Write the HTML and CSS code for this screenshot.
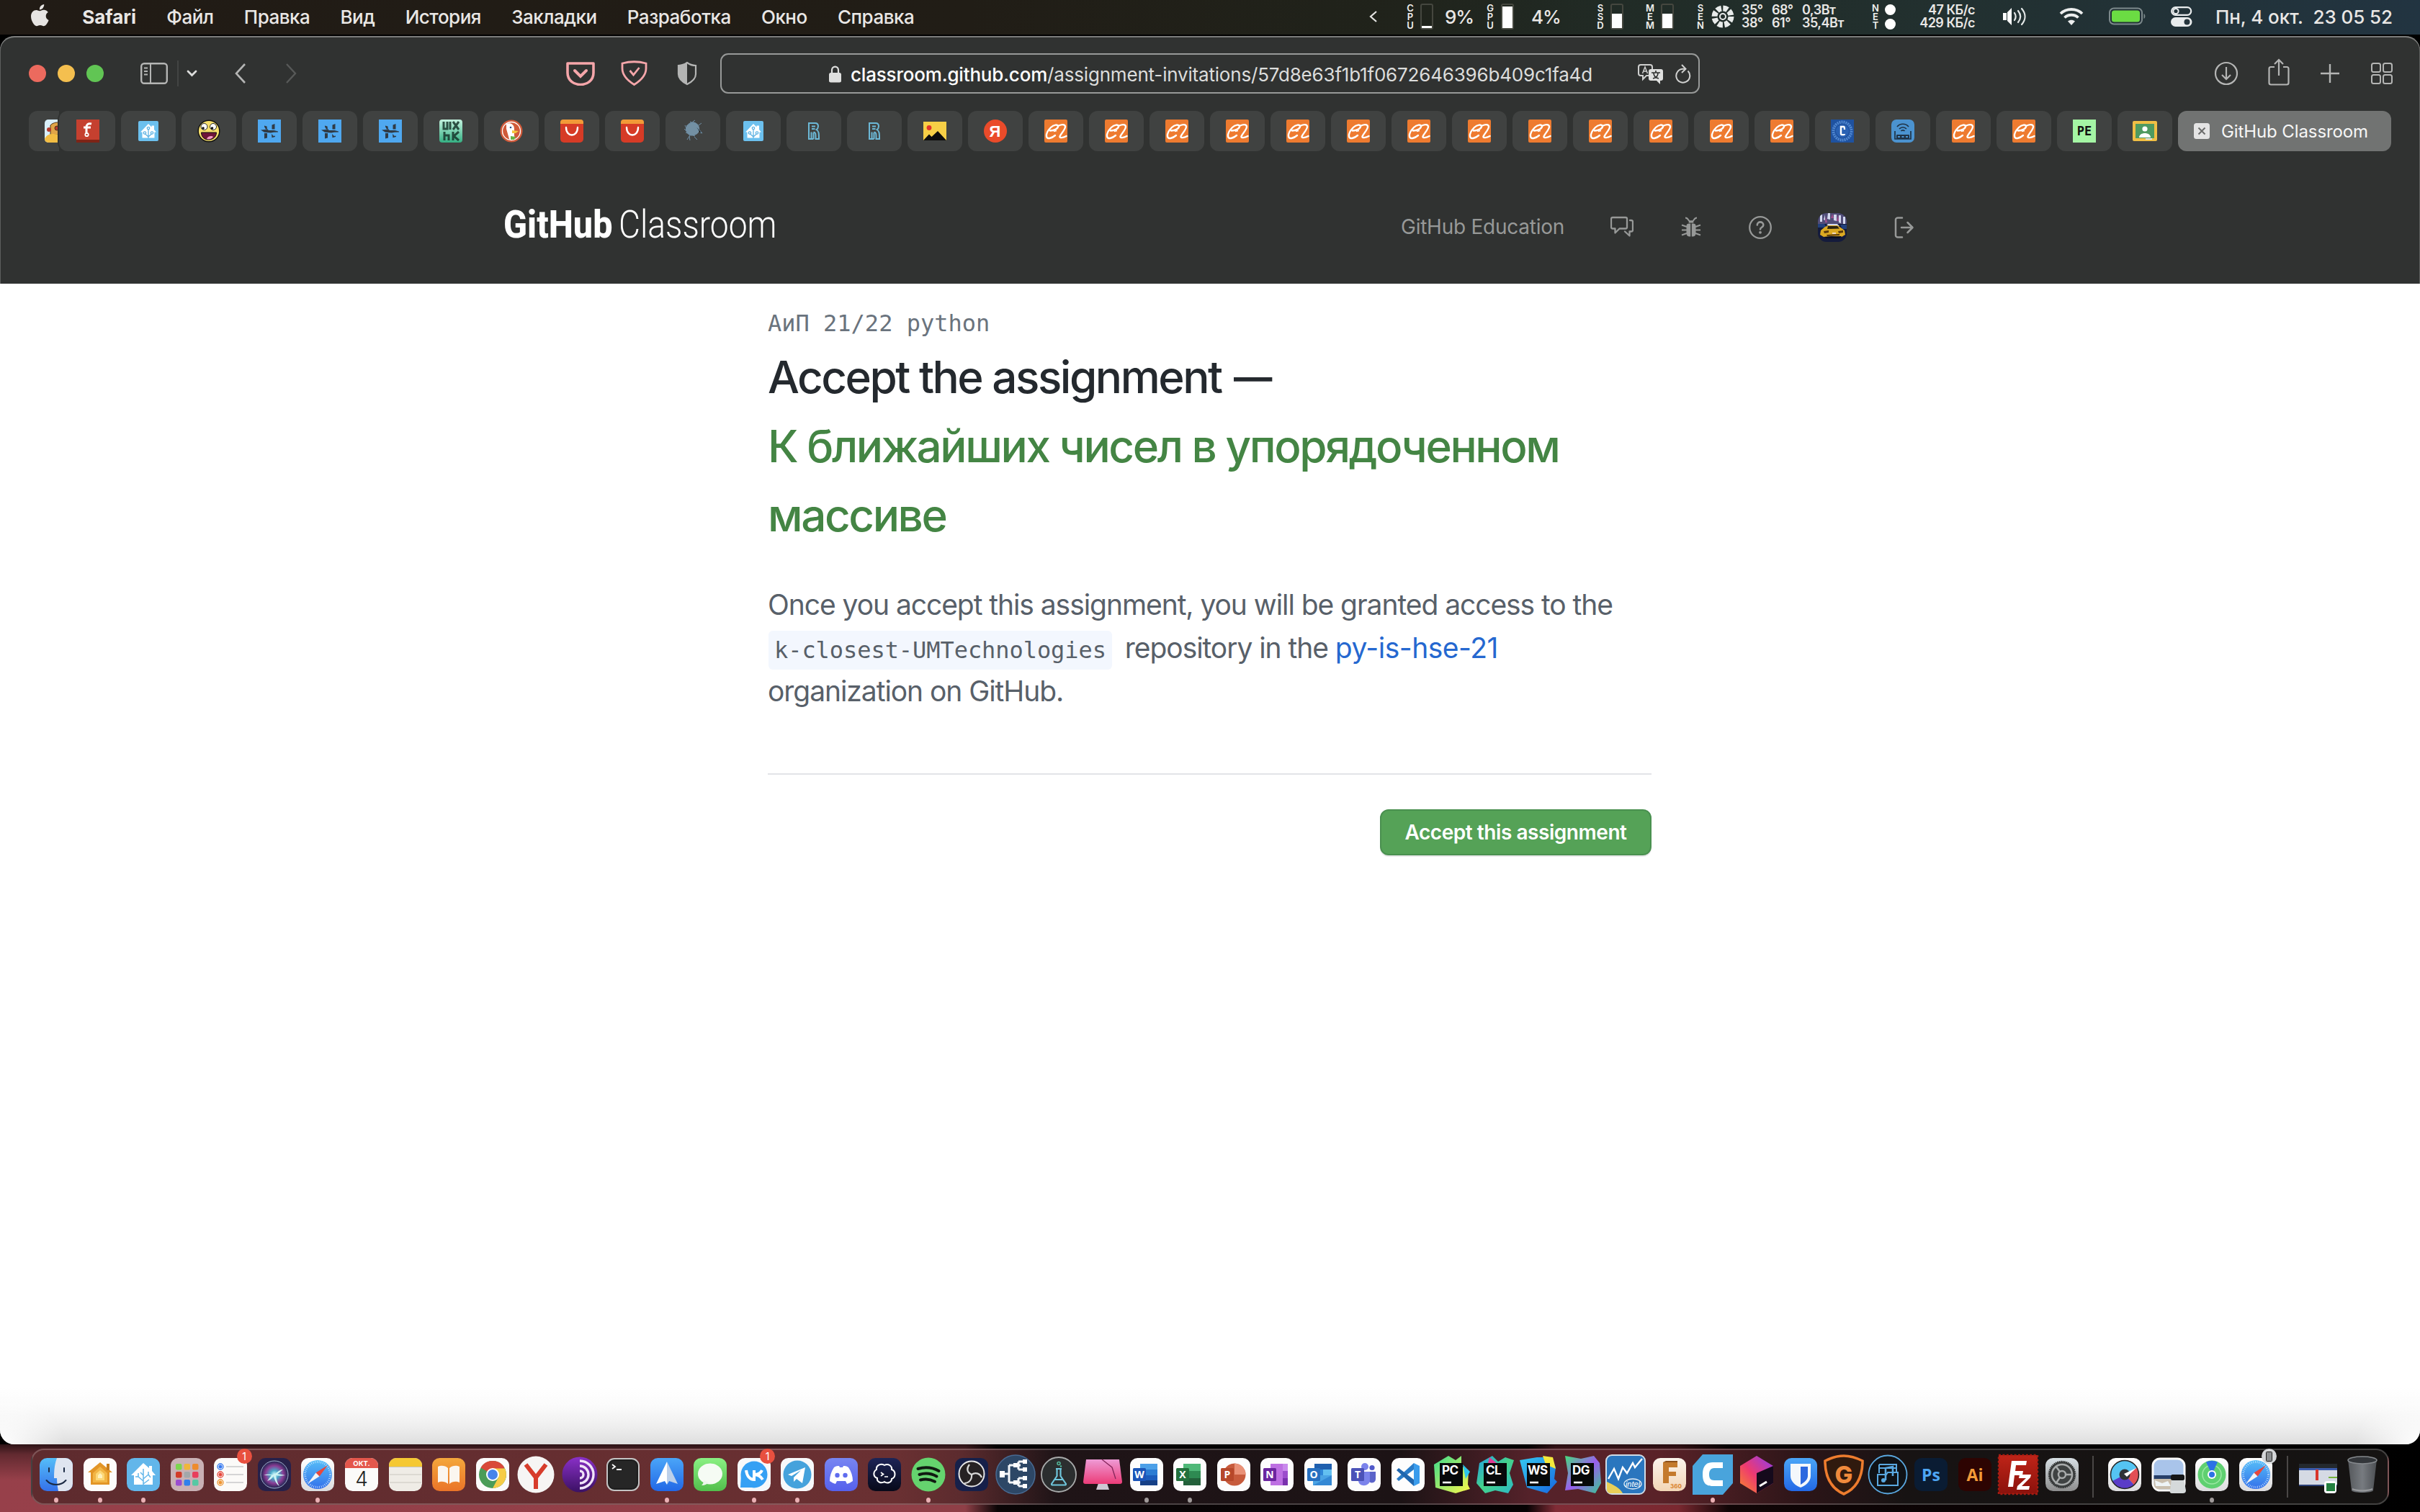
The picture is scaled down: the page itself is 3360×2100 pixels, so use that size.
FILE: index.html
```html
<!DOCTYPE html>
<html lang="ru">
<head>
<meta charset="utf-8">
<title>GitHub Classroom</title>
<link rel="stylesheet" href="styles.css">
</head>
<body>
<svg class="defs" width="0" height="0">
  <defs>
    <linearGradient id="gBlue" x1="0" y1="0" x2="0" y2="1"><stop offset="0" stop-color="#4aa5f8"/><stop offset="1" stop-color="#2268e6"/></linearGradient>
    <linearGradient id="gSky" x1="0" y1="0" x2="0" y2="1"><stop offset="0" stop-color="#55bdf8"/><stop offset="1" stop-color="#3471ea"/></linearGradient>
    <linearGradient id="gGreen" x1="0" y1="0" x2="0" y2="1"><stop offset="0" stop-color="#8af083"/><stop offset="1" stop-color="#52bf4c"/></linearGradient>
    <linearGradient id="gWhite" x1="0" y1="0" x2="0" y2="1"><stop offset="0" stop-color="#ffffff"/><stop offset="1" stop-color="#dcdcde"/></linearGradient>
    <linearGradient id="gOrange" x1="0" y1="0" x2="0" y2="1"><stop offset="0" stop-color="#f4a73c"/><stop offset="1" stop-color="#ea7428"/></linearGradient>
    <linearGradient id="gPurple" x1="0" y1="0" x2="0" y2="1"><stop offset="0" stop-color="#8a30c8"/><stop offset="1" stop-color="#3b1164"/></linearGradient>
    <linearGradient id="gPink" x1="0" y1="0" x2="0" y2="1"><stop offset="0" stop-color="#ee9bd6"/><stop offset="1" stop-color="#ec3c78"/></linearGradient>
    <linearGradient id="gIndigo" x1="0" y1="0" x2="0" y2="1"><stop offset="0" stop-color="#7785f2"/><stop offset="1" stop-color="#5661ec"/></linearGradient>
    <linearGradient id="gNavy" x1="0" y1="0" x2="0" y2="1"><stop offset="0" stop-color="#1d2456"/><stop offset="1" stop-color="#070919"/></linearGradient>
    <linearGradient id="gJetG" x1="0" y1="0" x2="1" y2="1"><stop offset="0" stop-color="#3ddb8c"/><stop offset="1" stop-color="#fcf84a"/></linearGradient>
    <linearGradient id="gJetC" x1="0" y1="0" x2="1" y2="1"><stop offset="0" stop-color="#1f9fe8"/><stop offset=".5" stop-color="#45d38a"/><stop offset="1" stop-color="#2bb8c8"/></linearGradient>
    <linearGradient id="gJetW" x1="0" y1="0" x2="1" y2="1"><stop offset="0" stop-color="#35c8f0"/><stop offset="1" stop-color="#1767e0"/></linearGradient>
    <linearGradient id="gJetD" x1="0" y1="0" x2="1" y2="1"><stop offset="0" stop-color="#45dc7c"/><stop offset=".5" stop-color="#9a5df0"/><stop offset="1" stop-color="#38c890"/></linearGradient>
    <linearGradient id="gTool" x1="0" y1="1" x2="1" y2="0"><stop offset="0" stop-color="#f98a2a"/><stop offset=".45" stop-color="#ee3a70"/><stop offset="1" stop-color="#8d3cf0"/></linearGradient>
    <linearGradient id="gGear" x1="0" y1="0" x2="0" y2="1"><stop offset="0" stop-color="#d7dfe4"/><stop offset="1" stop-color="#8d8d8d"/></linearGradient>
    <linearGradient id="gFusion" x1="0" y1="0" x2="0" y2="1"><stop offset="0" stop-color="#fbf4ec"/><stop offset="1" stop-color="#f3d6b6"/></linearGradient>
    <linearGradient id="gRedFz" x1="0" y1="0" x2="0" y2="1"><stop offset="0" stop-color="#bf2418"/><stop offset="1" stop-color="#8a120c"/></linearGradient>
    <linearGradient id="gTrash" x1="0" y1="0" x2="1" y2="0"><stop offset="0" stop-color="#55585c"/><stop offset=".5" stop-color="#777b80"/><stop offset="1" stop-color="#4c4f53"/></linearGradient>
    <linearGradient id="gUx" x1="0" y1="0" x2="0" y2="1"><stop offset="0" stop-color="#c3f3df"/><stop offset="1" stop-color="#35b083"/></linearGradient>
    <radialGradient id="gSiri"><stop offset="0" stop-color="#d8ffff"/><stop offset=".3" stop-color="#4aa8c8"/><stop offset=".65" stop-color="#8a3c94"/><stop offset="1" stop-color="#1c2450"/></radialGradient>

    <symbol id="ali" viewBox="0 0 32 32"><rect width="32" height="32" rx="2" fill="#ee7b30"/><path d="M8 15.500c6 0 11-3 11-6 0-3-6-2.500-10 1.500C5 15 2.500 20 3 23.500c.5 4 7 3 12-1.500" fill="none" stroke="#fff" stroke-width="2.400" stroke-linecap="round"/><path d="M13 16.500l4-1" stroke="#fff" stroke-width="1.600"/><path d="M20 8.500c4-2 8.500-2 9 1 .5 4-6 10-7.500 14-.5 2.500 5 2 9-.5" fill="none" stroke="#fff" stroke-width="2.400" stroke-linecap="round"/></symbol>
    <symbol id="hass" viewBox="0 0 28 28"><rect width="28" height="28" rx="2" fill="#6cc0ee"/><path d="M14 4l4.500 4.500V6.500H22v5.500l3 3.500h-2.500v8H5.500v-8H3z" fill="#fff"/><path d="M14 24V11M14 22l-5-4.500M14 22l5-4.500" stroke="#5fb2e2" stroke-width="1.300" fill="none"/><g fill="#fff" stroke="#5fb2e2" stroke-width="1.300"><circle cx="14" cy="10" r="1.700"/><circle cx="9" cy="16.500" r="1.700"/><circle cx="19" cy="16.500" r="1.700"/></g></symbol>
    <symbol id="hh" viewBox="0 0 32 32"><rect width="32" height="32" fill="#4fa8f0"/><path d="M4 14.500l10-1 .5 1.500h8l5.500 1.500v1l-6 .3-4 .7-9-.7z" fill="#303b46"/><path d="M19.500 7.500l4-1.500v7.500h-4zM9 19h4v6.500l-4 1zM9 8.500l3.500 1 .5 4H11L9 10zM19 20l3 3 2-.5v1.500l-4.500 1.200z" fill="#303b46"/></symbol>
    <symbol id="aliex" viewBox="0 0 32 32"><rect width="32" height="32" rx="5" fill="#d63b26"/><path d="M0 6V4a4 4 0 014-4h24a4 4 0 014 4v2z" fill="#f19a38"/><path d="M8 11c0 14 16 14 16 0" fill="none" stroke="#fff" stroke-width="2.400" stroke-linecap="round"/></symbol>
    <symbol id="rr" viewBox="0 0 24 24"><g fill="none" stroke="#6cb8d6" stroke-width="2"><path d="M5 1v22h3.500V13.500"/><path d="M4 1h10c3 0 4 2 4 4.500s-1 3.500-2.500 4.500C19 12 19 15 19 23h-4.500c0-6 .5-9.500-3-9.500M11.500 23V14M8.500 23h3M9 5.500h5M9 9h4.500"/></g></symbol>
    <symbol id="compass" viewBox="0 0 60 60"><rect x="7" y="7" width="46" height="46" rx="10.500" fill="url(#gWhite)"/><circle cx="30" cy="30" r="20" fill="url(#gSky)"/><circle cx="30" cy="30" r="17.500" fill="none" stroke="#d5eaff" stroke-width="3" stroke-dasharray=".7 2"/><path d="M44 17L32.500 32.500 27.500 27.500z" fill="#e8473c"/><path d="M16 43l11.500-15.500 5 5z" fill="#f4f4f4"/></symbol>
  </defs>
</svg>

<div class="menubar">
  <div class="menus">
    <svg class="apple" viewBox="0 0 26 32"><path d="M18.200 0c.2 2-.6 3.900-1.700 5.200-1.200 1.400-3 2.300-4.600 2.200-.2-1.900.7-3.900 1.700-5.100C14.800 1 16.700.1 18.200 0zM23.800 11c-2 1.300-3.100 3-3.100 5.300 0 2.700 1.600 4.800 3.900 5.700-.5 1.500-1.200 2.900-2.100 4.300-1.300 1.900-2.600 3.900-4.700 3.900s-2.600-1.200-5-1.200c-2.300 0-3.100 1.200-5 1.200S4.400 28.400 3 26.300C1.300 23.800 0 20.100 0 16.600c0-5.700 3.700-8.700 7.400-8.700 1.900 0 3.600 1.300 4.800 1.300s3.100-1.400 5.400-1.400c.9 0 4.100.1 6.200 3.200z" fill="#e6e4e2"/></svg>
    <span class="appname">Safari</span>
    <span>Файл</span>
    <span>Правка</span>
    <span>Вид</span>
    <span>История</span>
    <span>Закладки</span>
    <span>Разработка</span>
    <span>Окно</span>
    <span>Справка</span>
  </div>
  <div class="status">
    <svg width="14" height="18" viewBox="0 0 14 18"><path d="M11 2L3 9l8 7" fill="none" stroke="#e4e4e2" stroke-width="2.200"/></svg>
    <span class="vlabel">C<br>P<br>U</span>
    <span class="bar"><i style="height:3px"></i></span>
    <span class="pct">9%</span>
    <span class="vlabel">G<br>P<br>U</span>
    <span class="bar"><i style="height:30px"></i></span>
    <span class="pct">4%</span>
    <span class="vlabel">S<br>S<br>D</span>
    <span class="bar"><i style="height:20px"></i></span>
    <span class="vlabel">M<br>E<br>M</span>
    <span class="bar"><i style="height:20px"></i></span>
    <span class="vlabel">S<br>E<br>N</span>
    <svg width="32" height="32" viewBox="0 0 32 32"><circle cx="16" cy="16" r="11.500" fill="none" stroke="#e8ebea" stroke-width="8" stroke-dasharray="6.600 2.430"/><circle cx="16" cy="16" r="6" fill="#222d2a"/><circle cx="16" cy="16" r="4" fill="none" stroke="#e8ebea" stroke-width="2"/></svg>
    <span class="temps"><b>35°</b><b>68°</b><b>0,3Вт</b><b>38°</b><b>61°</b><b>35,4Вт</b></span>
    <span class="vlabel">N<br>E<br>T</span>
    <span class="netdots"><i></i><i></i></span>
    <span class="rates">47 КБ/с<br>429 КБ/с</span>
    <svg width="36" height="28" viewBox="0 0 36 28"><path d="M1 9h5v10H1zM7 8l6-6v24l-6-6z" fill="#fff"/><path d="M17 9c2 3 2 7 0 10M22 6c4 5 4 11 0 16M27 3c6 7 6 15 0 22" fill="none" stroke="#e4e8e8" stroke-width="2.200" stroke-linecap="round"/></svg>
    <svg width="34" height="26" viewBox="0 0 34 26"><path d="M2 9c8-8 22-8 30 0M7.500 14.500c5-5 14-5 19 0" fill="none" stroke="#eceeee" stroke-width="3.800"/><path d="M17 25l-5-5.500c3-2.500 7-2.500 10 0z" fill="#eceeee"/></svg>
    <svg width="52" height="26" viewBox="0 0 52 26"><rect x="1" y="1.500" width="45" height="22" rx="6" fill="none" stroke="#7d898c" stroke-width="2"/><rect x="4" y="4.500" width="39" height="16" rx="3.500" fill="#6bdc43"/><path d="M48.500 9c2.500 1 2.500 6 0 7z" fill="#7d898c"/></svg>
    <svg width="30" height="28" viewBox="0 0 30 28"><rect x="1.200" y="1.200" width="27" height="10.600" rx="5.300" fill="none" stroke="#e9eced" stroke-width="2.200"/><circle cx="7" cy="6.500" r="3.600" fill="none" stroke="#e9eced" stroke-width="2"/><rect y="15" width="29.500" height="13" rx="6.500" fill="#e9eced"/><circle cx="22.500" cy="21.500" r="4" fill="#26353d"/></svg>
    <span class="clock">Пн, 4 окт.&nbsp; 23 05 52</span>
  </div>
</div>

<div class="window">
  <div class="toolbar">
    <span class="lights"><i class="red"></i><i class="yellow"></i><i class="green"></i></span>
    <svg width="38" height="30" viewBox="0 0 38 30"><rect x="1.200" y="1.200" width="35.600" height="27.600" rx="4" fill="none" stroke="#b4b5b4" stroke-width="2.400"/><path d="M14 1v28M5 7.500h5M5 12h5M5 16.500h5" stroke="#b4b5b4" stroke-width="2"/></svg>
    <span class="vsep"></span>
    <svg width="15" height="10" viewBox="0 0 15 10"><path d="M2 2l5.500 5.500L13 2" fill="none" stroke="#dcdddc" stroke-width="2.800" stroke-linecap="round"/></svg>
    <svg width="16" height="30" viewBox="0 0 16 30"><path d="M14 2L2 15l12 13" fill="none" stroke="#b4b5b4" stroke-width="2.600"/></svg>
    <svg width="16" height="30" viewBox="0 0 16 30"><path d="M2 2l12 13L2 28" fill="none" stroke="#575958" stroke-width="2.400"/></svg>
    <svg width="40" height="34" viewBox="0 0 40 34"><path d="M2 3h36v13c0 22-36 22-36 0z" fill="none" stroke="#f5a6aa" stroke-width="3.600" stroke-linejoin="round"/><path d="M12 13l8 8 8-8" fill="none" stroke="#f5a6aa" stroke-width="4" stroke-linecap="round"/></svg>
    <svg width="37" height="36" viewBox="0 0 37 36"><path d="M2 4c11-3 22-3 33 0v7c0 9-6 16-16.500 22.500C8 27 2 20 2 11z" fill="none" stroke="#f5a6aa" stroke-width="2.800"/><path d="M12.500 14l5 6 8-10" fill="none" stroke="#f5a6aa" stroke-width="2.800"/></svg>
    <svg width="28" height="34" viewBox="0 0 28 34"><path d="M14 2c4 3 7 4 12 4v12c0 7-6 11-12 14C8 29 2 25 2 18V6c5 0 8-1 12-4z" fill="none" stroke="#b4b5b4" stroke-width="2.200"/><path d="M14 2v30C8 29 2 25 2 18V6c5 0 8-1 12-4z" fill="#b4b5b4"/></svg>
    <div class="url">
      <svg width="18" height="24" viewBox="0 0 18 24"><rect x="0" y="10" width="17" height="13.500" rx="2.500" fill="#dfe0df"/><path d="M4 11V6.500c0-6.500 9-6.500 9 0V11" fill="none" stroke="#dfe0df" stroke-width="2.200"/></svg>
      <span class="addr">classroom.github.com<em>/assignment-invitations/57d8e63f1b1f0672646396b409c1fa4d</em></span>
      <svg class="translate" width="38" height="30" viewBox="0 0 38 30"><path d="M5 2h13c2 0 3 1 3 3v9c0 2-1 3-3 3h-5l-5 5v-5H5c-2 0-3-1-3-3V5c0-2 1-3 3-3z" fill="none" stroke="#cfd0cf" stroke-width="2"/><path d="M7.500 14L11 5l3.500 9M9 11h4" fill="none" stroke="#cfd0cf" stroke-width="1.500"/><path d="M19 8h14c2 0 3 1 3 3v10c0 2-1 3-3 3h-1v5l-5-5h-8c-2 0-3-1-3-3V11c0-2 1-3 3-3z" fill="#dfe0df"/><path d="M20 13h12M26 10v3M22 21c5-1 7-4 7-8M30 21c-5-1-7-4-7-8" fill="none" stroke="#303231" stroke-width="1.700"/></svg>
      <svg width="22" height="28" viewBox="0 0 22 28"><path d="M17.500 9.500a9.500 9.500 0 11-6.500-2.800h2" fill="none" stroke="#cfd0cf" stroke-width="2"/><path d="M9 1l5.500 5.700L9 12" fill="none" stroke="#cfd0cf" stroke-width="2"/></svg>
    </div>
    <svg width="34" height="34" viewBox="0 0 34 34"><circle cx="17" cy="17" r="15" fill="none" stroke="#b4b5b4" stroke-width="2.200"/><path d="M17 8v17M11 19l6 6 6-6" fill="none" stroke="#b4b5b4" stroke-width="2.200"/></svg>
    <svg class="share" width="30" height="38" viewBox="0 0 30 38"><path d="M9 12H4c-2 0-2.500 1-2.500 2.500V34c0 1.500 1 2.500 2.500 2.500h22c1.500 0 2.500-1 2.500-2.500V14.500C28.500 13 28 12 26 12h-5M15 2v22M9 8l6-6 6 6" fill="none" stroke="#b4b5b4" stroke-width="2.200"/></svg>
    <svg width="26" height="28" viewBox="0 0 26 28"><path d="M13 1v26M0 14h26" stroke="#b4b5b4" stroke-width="2.400"/></svg>
    <svg width="30" height="30" viewBox="0 0 30 30"><g fill="none" stroke="#b4b5b4" stroke-width="2"><rect x="1" y="1" width="12" height="12" rx="2.500"/><rect x="17" y="1" width="12" height="12" rx="2.500"/><rect x="1" y="17" width="12" height="12" rx="2.500"/><rect x="17" y="17" width="12" height="12" rx="2.500"/></g></svg>
  </div>

  <div class="tabs">
    <div class="tabstack">
      <div class="tab under"><svg width="20" height="32" viewBox="0 0 20 32"><path d="M5 0h15v32H5a5 5 0 01-5-5V5a5 5 0 015-5z" fill="#d9effa"/><path d="M8 8c3-4 12-5 12-3v16H8z" fill="#e0a548" stroke="#4a3413" stroke-width="1"/><circle cx="6" cy="14" r="3" fill="#b33a2e"/><circle cx="17" cy="12" r="3" fill="#b33a2e" stroke="#4a3413"/><path d="M0 27c3-8 12-8 20-6v11H5a5 5 0 01-5-5z" fill="#f2bd43"/></svg></div>
      <div class="tab over"><svg width="32" height="32" viewBox="0 0 32 32"><rect width="32" height="32" fill="#c5402f"/><rect y="28" width="32" height="4" fill="#7e2416"/><path d="M21 6c-5-1-7 1-7 5v9M10 11h10" fill="none" stroke="#fff" stroke-width="3"/><circle cx="14.500" cy="21" r="2.200" fill="none" stroke="#fff" stroke-width="1.800"/></svg></div>
    </div>
    <div class="tab"><svg class="f28"><use href="#hass"/></svg></div>
    <div class="tab"><svg class="f32" viewBox="0 0 32 32"><circle cx="16" cy="16" r="14.800" fill="#f7e06c" stroke="#111" stroke-width="1.400"/><circle cx="9.500" cy="10" r="4.500" fill="#fff" stroke="#222"/><circle cx="22" cy="10" r="4.500" fill="#fff" stroke="#222"/><circle cx="8" cy="12" r="1.800" fill="#111"/><circle cx="20.500" cy="12" r="1.800" fill="#111"/><path d="M5.500 18h21c0 13-21 14-21 0z" fill="#6e1538" stroke="#111"/><path d="M13 27c1-4 7-5 9-3-2 3-6 4-9 3z" fill="#f59ac4"/></svg></div>
    <div class="tab"><svg class="f32"><use href="#hh"/></svg></div>
    <div class="tab"><svg class="f32"><use href="#hh"/></svg></div>
    <div class="tab"><svg class="f32"><use href="#hh"/></svg></div>
    <div class="tab"><svg class="f32" viewBox="0 0 32 32"><rect width="32" height="32" rx="4" fill="url(#gUx)"/><path d="M6 3v10h5V3M15 3v11M19 3l8 11M27 3l-8 11M7 17v12M7 22h6v7M19 17v12M27 17l-7 6 7 6" fill="none" stroke="#16362b" stroke-opacity=".85" stroke-width="3"/></svg></div>
    <div class="tab"><svg class="f32" viewBox="0 0 32 32"><circle cx="16" cy="16" r="15.500" fill="#d05a3a"/><circle cx="16" cy="16" r="12.500" fill="none" stroke="#fff" stroke-width="1.300"/><path d="M9 6c5-2 11 0 11 7v9l1 6c-4 1-7 1-8-1L9 13z" fill="#fff"/><path d="M17 15l9 1-4 3h-5z" fill="#f5c63d"/><path d="M15 23l7 1-2 4h-5z" fill="#64b446"/><circle cx="15" cy="11" r="1.300" fill="#2d4f8e"/></svg></div>
    <div class="tab"><svg class="f32"><use href="#aliex"/></svg></div>
    <div class="tab"><svg class="f32"><use href="#aliex"/></svg></div>
    <div class="tab"><svg class="f32" viewBox="0 0 32 32"><path d="M9 7c3-4 9-5 13-1 4 3 4 10 1 13-4 4-10 5-14 1s-4-9 0-13z" fill="#7d9eb5" fill-opacity=".85"/><path d="M7 9l10-6M12 3l11 5M4 13l9 9M6 18l13 5M26 18l3 1-8-9M24 8l4-3M18 24l4 4M12 22l-4 6M11 23l1 6M16 3l3-2M5 8l4 8" stroke="#6f8fa6" stroke-width="1"/></svg></div>
    <div class="tab"><svg class="f28"><use href="#hass"/></svg></div>
    <div class="tab"><svg class="f24"><use href="#rr"/></svg></div>
    <div class="tab"><svg class="f24"><use href="#rr"/></svg></div>
    <div class="tab"><svg width="32" height="26" viewBox="0 0 32 26"><rect width="32" height="26" fill="#f7cf46"/><circle cx="8" cy="8.500" r="3.400" fill="#e0352b"/><path d="M0 26l8-8.500 3.500 3.500 8.500-8 12 13z" fill="#0d0d0d"/></svg></div>
    <div class="tab"><svg class="f32" viewBox="0 0 32 32"><circle cx="16" cy="16" r="16" fill="#ea4b2a"/><text x="15.500" y="24" text-anchor="middle" class="ya">Я</text></svg></div>
    <div class="tab"><svg class="f32"><use href="#ali"/></svg></div>
    <div class="tab"><svg class="f32"><use href="#ali"/></svg></div>
    <div class="tab"><svg class="f32"><use href="#ali"/></svg></div>
    <div class="tab"><svg class="f32"><use href="#ali"/></svg></div>
    <div class="tab"><svg class="f32"><use href="#ali"/></svg></div>
    <div class="tab"><svg class="f32"><use href="#ali"/></svg></div>
    <div class="tab"><svg class="f32"><use href="#ali"/></svg></div>
    <div class="tab"><svg class="f32"><use href="#ali"/></svg></div>
    <div class="tab"><svg class="f32"><use href="#ali"/></svg></div>
    <div class="tab"><svg class="f32"><use href="#ali"/></svg></div>
    <div class="tab"><svg class="f32"><use href="#ali"/></svg></div>
    <div class="tab"><svg class="f32"><use href="#ali"/></svg></div>
    <div class="tab"><svg class="f32"><use href="#ali"/></svg></div>
    <div class="tab"><svg class="f32" viewBox="0 0 32 32"><rect width="32" height="32" fill="#1f52a0"/><circle cx="16" cy="16" r="12.500" fill="none" stroke="#4f86cf" stroke-width="4" stroke-dasharray="2 1"/><circle cx="16" cy="16" r="9" fill="#2a62b4"/><path d="M14 9v11c0 1.500 5 1.500 5 0M13 10h5c1 0 1 2 1 4" fill="none" stroke="#fff" stroke-width="2.400"/></svg></div>
    <div class="tab"><svg class="f32" viewBox="0 0 32 32"><rect width="32" height="32" rx="7" fill="#4b93d0"/><g fill="none" stroke="#1f3346" stroke-width="1.700"><path d="M8 10c4-5 12-5 16 0M11 13c3-3 7-3 10 0M13.500 16c1-1.500 4-1.500 5 0"/><path d="M5 16v11h22V16"/></g><rect x="7" y="21" width="18" height="6" rx="1" fill="#1f3346"/><path d="M9 24h3M14.500 24h3M20 24h3" stroke="#4b93d0" stroke-width="2"/></svg></div>
    <div class="tab"><svg class="f32"><use href="#ali"/></svg></div>
    <div class="tab"><svg class="f32"><use href="#ali"/></svg></div>
    <div class="tab"><svg class="f32" viewBox="0 0 32 32"><rect width="32" height="32" fill="#a4f5a4"/><text x="16" y="22" text-anchor="middle" class="pe">PE</text></svg></div>
    <div class="tab"><svg width="34" height="28" viewBox="0 0 34 28"><rect width="34" height="28" rx="2" fill="#f0bf45"/><rect x="4" y="4" width="26" height="20" fill="#4f9a60"/><circle cx="17" cy="11" r="3.600" fill="#fff"/><path d="M9 23c0-8 16-8 16 0z" fill="#fff"/><path d="M18 25h9" stroke="#e4e4e4" stroke-width="2"/></svg></div>
    <div class="tab active"><svg width="22" height="22" viewBox="0 0 22 22"><rect width="22" height="22" rx="3.500" fill="#e4e4e4"/><path d="M6.500 6.500l9 9M15.500 6.500l-9 9" stroke="#6b6c6b" stroke-width="2"/></svg><span>GitHub Classroom</span></div>
  </div>

  <div class="siteheader">
    <div class="logo"><b><span>GitHub</span></b><i><span>Classroom</span></i></div>
    <div class="nav">
      <span class="edu">GitHub Education</span>
      <svg width="32" height="32" viewBox="0 0 32 32"><g fill="none" stroke="#979998" stroke-width="2.300" stroke-linejoin="round" stroke-linecap="round"><path d="M3 2h18c1.200 0 2 .8 2 2v11.500c0 1.200-.8 2-2 2h-8.500L6.500 23.500v-6H3c-1.200 0-2-.8-2-2V4c0-1.200.8-2 2-2z"/><path d="M27 6h2c1.200 0 2 .8 2 2v11.500c0 1.200-.8 2-2 2h-2.500V27.500l-6.500-6"/></g></svg>
      <svg width="32" height="32" viewBox="0 0 32 32"><path d="M8 2.500c4 0 4 4 6 5h4c2-1 2-5 6-5" fill="none" stroke="#979998" stroke-width="2"/><path d="M12.500 9.500c0-4.500 7-4.500 7 0z" fill="#979998"/><path d="M15.200 10.500H13c-2 0-3.500 1-3.500 3V24c0 3 2 4.500 4 4.500h1.700zM16.800 10.500H19c2 0 3.500 1 3.500 3V24c0 3-2 4.500-4 4.500h-1.700z" fill="#979998"/><path d="M10 15l-7-2.500M10 19.500H3M10 24l-7 2.500M22 15l7-2.500M22 19.500h7M22 24l7 2.500" stroke="#979998" stroke-width="2"/></svg>
      <svg width="32" height="32" viewBox="0 0 32 32"><circle cx="16" cy="16" r="14.800" fill="none" stroke="#979998" stroke-width="2.300"/><path d="M11.800 12.500c0-5.500 8.500-5.500 8.500 0 0 3.500-4.300 3-4.300 6" fill="none" stroke="#979998" stroke-width="2.600" stroke-linecap="round"/><circle cx="16" cy="22.800" r="1.900" fill="#979998"/></svg>
      <svg class="avatar" width="40" height="40" viewBox="0 0 40 40"><rect width="40" height="40" fill="#141b3c"/><rect width="40" height="15" fill="#514d78"/><path d="M3 12V3l3-2v11zM8 9l2-7v8zM13 8l1-8h3v9zM22 10V2h4v9zM29 13V3h3v11zM35 15V5h3v10zM12 17l2-2h13l3 3z" fill="#d3d8ee"/><path d="M18 7l2-6 2 6zM26 11l2-9 1 9zM10 13l1-8 2 8z" fill="#a3508f"/><path d="M0 15h9l3 5H0zM31 16h9v6h-6z" fill="#22407c"/><path d="M4 24l6-5 5-2h12l6 4 4 3 1 6-5 3-14-1-11 1-5-3z" fill="#dca922"/><path d="M14 18l13 0 3 3.500-17 .5z" fill="#2c2410"/><path d="M8 25l7-1v3l-6 1zM28 25l7-1v3l-6 1zM12 30l18-1v2l-17 1z" fill="#5b3a0c"/><path d="M20 27h5v2h-5z" fill="#f0d9c0"/><path d="M9 33l24-1-3 3H12z" fill="#090d20"/></svg>
      <svg width="32" height="32" viewBox="0 0 32 32"><path d="M13 2.500H7C5.500 2.500 4 3.500 4 5v22c0 1.500 1.500 2.500 3 2.500h6M12 16h15M20.500 9l7 7-7 7" fill="none" stroke="#979998" stroke-width="2.500" stroke-linecap="round" stroke-linejoin="round"/></svg>
    </div>
  </div>

  <div class="page">
    <div class="content">
      <div class="course">АиП 21/22 python</div>
      <h1>Accept the assignment <span class="dash">—</span><br><span class="task">К ближайших чисел в упорядоченном<br>массиве</span></h1>
      <p>Once you accept this assignment, you will be granted access to the<br><code>k-closest-UMTechnologies</code> repository in the <a>py-is-hse-21</a><br>organization on GitHub.</p>
      <div class="actions"><button>Accept this assignment</button></div>
    </div>
  </div>
</div>

<div class="desk">
  <div class="dock">
    <div class="app run"><svg viewBox="0 0 60 60"><rect x="7" y="7" width="46" height="46" rx="10.500" fill="url(#gSky)"/><path d="M31 7h11.500A10.500 10.500 0 0153 17.500v25A10.500 10.500 0 0142.500 53H33c-1-5-2-11-2-18h-4c0-12 1-20 4-28z" fill="#dfe5f0"/><path d="M20 21v5M41 21v5M16.500 38c7 8 20 8 27 0" fill="none" stroke="#1b2a44" stroke-width="2" stroke-linecap="round"/></svg></div>
    <div class="app run"><svg viewBox="0 0 60 60"><rect x="7" y="7" width="46" height="46" rx="10.500" fill="#fdfcfa"/><path d="M30 13l17 14h-4v17H17V27h-4z" fill="#e29526"/><path d="M39 15h4v9h-4z" fill="#c97d18"/><path d="M30 19l10 9v13H20V28z" fill="#f2b544"/><path d="M30 24l6 5v9H24v-9z" fill="#fcd777"/><path d="M30 28l3 3v4h-6v-4z" fill="#fff1bd"/></svg></div>
    <div class="app run"><svg viewBox="0 0 60 60"><rect x="7" y="7" width="46" height="46" rx="10.500" fill="#62b6ea"/><path d="M30 14l8 7v-3h4v7l5 6h-4v13H17V31h-4z" fill="#fff"/><path d="M30 44V22M30 39l-7-6v-5M30 36l7-6v-4M30 31l-4-4M23 33h-4M37 30l3 4M30 43l8-6" fill="none" stroke="#62b6ea" stroke-width="1.500"/></svg></div>
    <div class="app"><svg viewBox="0 0 60 60"><rect x="7" y="7" width="46" height="46" rx="10.500" fill="#c9b1b5"/><rect x="14" y="15" width="8.500" height="8.500" rx="2" fill="#7bd64e"/><rect x="25.500" y="15" width="8.500" height="8.500" rx="2" fill="#f0b63a"/><rect x="37" y="15" width="8.500" height="8.500" rx="2" fill="#ee8b2d"/><rect x="14" y="26" width="8.500" height="8.500" rx="2" fill="#d23b28"/><rect x="25.500" y="26" width="8.500" height="8.500" rx="2" fill="#a2a7aa"/><rect x="37" y="26" width="8.500" height="8.500" rx="2" fill="#e83f5c"/><rect x="14" y="37" width="8.500" height="8.500" rx="2" fill="#9a4dd0"/><rect x="25.500" y="37" width="8.500" height="8.500" rx="2" fill="#2f80ec"/><rect x="37" y="37" width="8.500" height="8.500" rx="2" fill="#56c8a4"/></svg></div>
    <div class="app"><svg viewBox="0 0 60 60"><rect x="7" y="7" width="46" height="46" rx="10.500" fill="#fbfaf8"/><path d="M24 19h24M24 30h24M24 41h24" stroke="#c9c9c9" stroke-width="1.500"/><g fill="none" stroke-width="1.300"><circle cx="16" cy="19" r="4" stroke="#3478f0"/><circle cx="16" cy="30" r="4" stroke="#e5463a"/><circle cx="16" cy="41" r="4" stroke="#ee9430"/></g><circle cx="16" cy="19" r="2.500" fill="#3478f0"/><circle cx="16" cy="30" r="2.500" fill="#e5463a"/><circle cx="16" cy="41" r="2.500" fill="#ee9430"/></svg><span class="badge">1</span></div>
    <div class="app"><svg viewBox="0 0 60 60"><rect x="7" y="7" width="46" height="46" rx="10.500" fill="#26204a"/><circle cx="30" cy="30" r="19" fill="url(#gSiri)" stroke="#a9b4d4" stroke-width="1"/><path d="M15 31c7-3 10 0 15-1 4-4 8-7 12-7-3 3-7 5-10 8 1 6 2 11 5 15-5-3-7-9-8-14-3 4-6 6-9 7 2-3 4-5 6-8-4 0-7 0-11 0zM31 29c5 0 9 1 14 2-5 1-9 1-13 0z" fill="#cdf3f3"/></svg></div>
    <div class="app run"><svg><use href="#compass"/></svg></div>
    <div class="app"><svg viewBox="0 0 60 60"><rect x="7" y="7" width="46" height="46" rx="10.500" fill="#fbfaf9"/><path d="M7 21v-3.500A10.500 10.500 0 0117.500 7h25A10.500 10.500 0 0153 17.500V21z" fill="#e4574c"/><text x="30" y="18" text-anchor="middle" class="cal-m">ОКТ.</text><text x="30" y="46" text-anchor="middle" class="cal-d">4</text></svg></div>
    <div class="app"><svg viewBox="0 0 60 60"><rect x="7" y="7" width="46" height="46" rx="10.500" fill="#efece6"/><path d="M7 19v-1.500A10.500 10.500 0 0117.500 7h25A10.500 10.500 0 0153 17.500V19z" fill="#f5c832"/><path d="M7 19.500h46M8 30h44M8 41h44" stroke="#c9c6bf" stroke-width="1"/></svg></div>
    <div class="app"><svg viewBox="0 0 60 60"><rect x="7" y="7" width="46" height="46" rx="10.500" fill="url(#gOrange)"/><path d="M29 21c-4-4-10-4-14-2v22c4-2 10-2 14 2zM31 21c4-4 10-4 14-2v22c-4-2-10-2-14 2z" fill="#fbf6ef"/></svg></div>
    <div class="app"><svg viewBox="0 0 60 60"><rect x="7" y="7" width="46" height="46" rx="10.500" fill="#fbfbfb"/><circle cx="30" cy="30" r="19" fill="#4a9c58"/><path d="M30 30L13.500 20.500A19 19 0 0146.500 20.500z" fill="#d9493a"/><path d="M30 21.500h16.900A19 19 0 0130 49l8-15z" fill="#f6cc47"/><circle cx="30" cy="30" r="9" fill="#fff"/><circle cx="30" cy="30" r="7" fill="#4783ea"/></svg></div>
    <div class="app"><svg viewBox="0 0 60 60"><circle cx="30" cy="30" r="25.500" fill="#f6f5f4"/><path d="M16 16l14 18L44 16M30 33v17" fill="none" stroke="#d73c2b" stroke-width="6"/></svg></div>
    <div class="app"><svg viewBox="0 0 60 60"><circle cx="30" cy="30" r="24.500" fill="url(#gPurple)"/><path d="M30 11a19 19 0 010 38M30 18a12 12 0 010 24M30 25a5 5 0 010 10" fill="none" stroke="#f1e4f8" stroke-width="3.400"/></svg></div>
    <div class="app"><svg viewBox="0 0 60 60"><rect x="8" y="8" width="44" height="44" rx="10" fill="#1d1d1d" stroke="#c4c4c4" stroke-width="2"/><rect x="11" y="11" width="38" height="38" rx="7" fill="#262626"/><path d="M15 16l4 3-4 3M21 23h7" fill="none" stroke="#fff" stroke-width="1.800"/></svg></div>
    <div class="app run"><svg viewBox="0 0 60 60"><rect x="7" y="7" width="46" height="46" rx="10.500" fill="url(#gBlue)"/><path d="M30 12l15 31-12-4-3 5z" fill="#bcd0ea"/><path d="M30 12L15 43l12-4 3 5z" fill="#fff"/></svg></div>
    <div class="app"><svg viewBox="0 0 60 60"><rect x="7" y="7" width="46" height="46" rx="10.500" fill="url(#gGreen)"/><ellipse cx="30" cy="29" rx="17" ry="14.500" fill="#f5fbf4"/><path d="M21 38c0 3-1 5-3 7 5 0 8-2 10-4z" fill="#eef6ee"/></svg></div>
    <div class="app run"><svg viewBox="0 0 60 60"><rect x="7" y="7" width="46" height="46" rx="10.500" fill="#f7f8fa"/><circle cx="30" cy="30" r="18.500" fill="#35a0f4"/><path d="M12 30l-1 18h19z" fill="#35a0f4"/><path d="M19 24c1 8 5 13 11 13V24M41 24c-2 5-6 6-11 6 5 0 9 2 12 7" fill="none" stroke="#fff" stroke-width="4"/></svg><span class="badge">1</span></div>
    <div class="app run"><svg viewBox="0 0 60 60"><rect x="7" y="7" width="46" height="46" rx="10.500" fill="#f7f8fa"/><circle cx="30" cy="30" r="19.500" fill="#45a2dc"/><path d="M17 30l24-10-4 22-8-6-4 4v-6l10-10-13 8z" fill="#fff"/></svg></div>
    <div class="app"><svg viewBox="0 0 60 60"><rect x="7" y="7" width="46" height="46" rx="10.500" fill="url(#gIndigo)"/><path d="M20 20c3-2 5-2 7-2l1 2h4l1-2c2 0 4 0 7 2 4 6 6 12 6 19-3 2-5 3-8 4l-2-4H24l-2 4c-3-1-5-2-8-4 0-7 2-13 6-19z" fill="#fff"/><circle cx="24.500" cy="31" r="3.200" fill="#5f6cee"/><circle cx="35.500" cy="31" r="3.200" fill="#5f6cee"/></svg></div>
    <div class="app"><svg viewBox="0 0 60 60"><rect x="7" y="7" width="46" height="46" rx="10.500" fill="url(#gNavy)"/><path d="M30 17c5-3 11 1 10 6 6 2 6 11 0 13 0 5-6 7-10 4-5 3-11 0-10-5-6-2-6-9-1-12-1-6 6-9 11-6z" fill="none" stroke="#fff" stroke-width="2"/><path d="M25 27l3.500 2.500L25 32M30 33h5" fill="none" stroke="#fff" stroke-width="1.700"/></svg></div>
    <div class="app run"><svg viewBox="0 0 60 60"><circle cx="30" cy="30" r="23.500" fill="#65d36e"/><path d="M15.500 22c10-3 20-2 29 3M17.500 30c8-2.500 17-1.500 24 2.500M19 37.500c7-2 14-1 20 2.200" fill="none" stroke="#101a11" stroke-width="4" stroke-linecap="round"/></svg></div>
    <div class="app"><svg viewBox="0 0 60 60"><rect x="7" y="7" width="46" height="46" rx="10.500" fill="#16204a"/><circle cx="30" cy="29" r="17.500" fill="#262223" stroke="#e6e6e6" stroke-width="2"/><path d="M30 30c-7-3-7-9-3-14M30 30c6-4 12-1 14 4M30 30c1 7-4 12-10 12" fill="none" stroke="#d8d8d8" stroke-width="2.200"/></svg></div>
    <div class="app"><svg viewBox="0 0 60 60"><circle cx="30" cy="30" r="27" fill="#2d4766" stroke="#486a92" stroke-width="1.500"/><path d="M9 29h12M21 17v24M21 17h16M21 41h16M34 12v11M34 35v11M34 12h11M34 23h11M34 35h11M34 46h11" fill="none" stroke="#f4f6f8" stroke-width="3"/><path d="M8 25h7v9H8zM27 14h6v6h-6zM27 38h6v6h-6zM40 9h6v6h-6zM40 20h6v6h-6zM40 32h6v6h-6zM40 43h6v6h-6z" fill="#fff"/></svg></div>
    <div class="app"><svg viewBox="0 0 60 60"><circle cx="30" cy="30" r="24" fill="#2b2e2f" stroke="#a8aaaa" stroke-width="1.800"/><path d="M26 22h8M27.500 23v9L20 43c0 1 0 1.500 1.500 1.500h17c1.500 0 1.500-.5 1.500-1.500l-7.500-11v-9M23.500 37h13" fill="none" stroke="#6fc6dc" stroke-width="2.200"/><circle cx="30" cy="14.500" r="2" fill="none" stroke="#54b89a" stroke-width="1.500"/><circle cx="33" cy="18.500" r="1.200" fill="#54b89a"/></svg></div>
    <div class="app"><svg viewBox="0 0 60 60"><path d="M24 42h12l3 9H21z" fill="#cdc7d2"/><path d="M7 9h46l4 31c0 2-1 3-3 3H6c-2 0-3-1-3-3z" fill="url(#gPink)"/><path d="M29 9l14 11 5 16" fill="none" stroke="#84255a" stroke-width="1.300"/></svg></div>
    <div class="app run dim"><svg viewBox="0 0 60 60"><rect x="7" y="7" width="46" height="46" rx="10.500" fill="#fdfdfd"/><path d="M21 15h24v8H21z" fill="#4ca0e8"/><path d="M21 23h24v8H21z" fill="#2c7cd3"/><path d="M21 31h24v7H21z" fill="#1c5cbc"/><path d="M21 38h24v7H21z" fill="#153f86"/><rect x="11" y="21" width="18" height="18" rx="1.500" fill="#1b55b8"/><text x="20" y="35" text-anchor="middle" class="ms">W</text></svg></div>
    <div class="app run dim"><svg viewBox="0 0 60 60"><rect x="7" y="7" width="46" height="46" rx="10.500" fill="#fdfdfd"/><path d="M21 15h24v10H21z" fill="#4fb878"/><path d="M21 25h24v10H21z" fill="#2e8a52"/><path d="M21 35h24v10H21z" fill="#22603a"/><rect x="11" y="21" width="18" height="18" rx="1.500" fill="#23703d"/><text x="20" y="35" text-anchor="middle" class="ms">X</text></svg></div>
    <div class="app"><svg viewBox="0 0 60 60"><rect x="7" y="7" width="46" height="46" rx="10.500" fill="#fdfdfd"/><circle cx="31" cy="30" r="15.500" fill="#c75b3c"/><path d="M31 14.500A15.500 15.500 0 0146.500 30H31z" fill="#e99177"/><rect x="12" y="21" width="18" height="18" rx="1.500" fill="#b7482a"/><text x="21" y="35" text-anchor="middle" class="ms">P</text></svg></div>
    <div class="app"><svg viewBox="0 0 60 60"><rect x="7" y="7" width="46" height="46" rx="10.500" fill="#fdfdfd"/><rect x="21" y="15" width="24" height="30" fill="#bd6fe2"/><path d="M38 15h7v10h-7z" fill="#c98aec"/><path d="M38 25h7v10h-7z" fill="#9c4dcc"/><path d="M38 35h7v10h-7z" fill="#7a31ae"/><rect x="11" y="21" width="18" height="18" rx="1.500" fill="#6c26a0"/><text x="20" y="35" text-anchor="middle" class="ms">N</text></svg></div>
    <div class="app"><svg viewBox="0 0 60 60"><rect x="7" y="7" width="46" height="46" rx="10.500" fill="#fdfdfd"/><path d="M21 15h24v8H21z" fill="#1f5fae"/><path d="M21 23h12v8H21z" fill="#2f86d8"/><path d="M33 23h12v8H33z" fill="#63c0f0"/><path d="M19 31h26v14H19z" fill="#4aa3e4"/><path d="M19 45l26-14v14z" fill="#3388d4"/><rect x="11" y="21" width="18" height="18" rx="1.500" fill="#2770c0"/><text x="20" y="35" text-anchor="middle" class="ms">O</text></svg></div>
    <div class="app"><svg viewBox="0 0 60 60"><rect x="7" y="7" width="46" height="46" rx="10.500" fill="#fdfdfd"/><circle cx="31" cy="19" r="5" fill="#7b83eb"/><circle cx="41" cy="20.500" r="3.600" fill="#5059c9"/><path d="M36 26h10v10c0 6-7 7-10 3z" fill="#5a63c9"/><path d="M22 26h16v12c0 9-16 10-16 0z" fill="#7b83eb"/><rect x="12" y="21" width="18" height="18" rx="1.500" fill="#4b52b8"/><text x="21" y="35" text-anchor="middle" class="ms">T</text></svg></div>
    <div class="app"><svg viewBox="0 0 60 60"><rect x="7" y="7" width="46" height="46" rx="10.500" fill="#fdfdfd"/><path d="M38 14l8 4v24l-8 4z" fill="#3a9cec"/><path d="M38 14v9L17 39l-3-3z" fill="#2a7cc8"/><path d="M38 46v-9L17 21l-3 3z" fill="#1f66ae"/></svg></div>
    <div class="app"><svg viewBox="0 0 60 60"><path d="M6 16l20-12 10 6 8-6v14l10 6-1 20 3 6-20 6-14-4-14-4z" fill="url(#gJetG)"/><path d="M46 16l10 10-6 10z" fill="#2cc4ec"/><rect x="14" y="14" width="32" height="32" fill="#07090a"/><text x="17" y="30" class="jet">PC</text><path d="M18 41h12" stroke="#fff" stroke-width="2.600"/></svg></div>
    <div class="app"><svg viewBox="0 0 60 60"><path d="M8 14l18-10 8 8 10-6 12 4-6 18 5 16-7 12-18-4-14 4L4 42z" fill="url(#gJetC)"/><path d="M22 6l10 8H20z" fill="#e23c94"/><rect x="14" y="14" width="32" height="32" fill="#07090a"/><text x="17" y="30" class="jet">CL</text><path d="M18 41h12" stroke="#fff" stroke-width="2.600"/></svg></div>
    <div class="app"><svg viewBox="0 0 60 60"><path d="M4 10l24-4 20 0 6 14-2 16 4 4-14 16-28-8z" fill="url(#gJetW)"/><path d="M36 4l14 2 4 16-14-6z" fill="#f4e83c"/><rect x="14" y="14" width="32" height="32" fill="#07090a"/><text x="15" y="30" class="jet">WS</text><path d="M18 41h12" stroke="#fff" stroke-width="2.600"/></svg></div>
    <div class="app"><svg viewBox="0 0 60 60"><path d="M6 4l22 4 18-4 8 10 2 28-8 14-24-6-18 2 4-24z" fill="url(#gJetD)"/><rect x="14" y="14" width="32" height="32" fill="#07090a"/><text x="16" y="30" class="jet">DG</text><path d="M18 41h12" stroke="#fff" stroke-width="2.600"/></svg></div>
    <div class="app"><svg viewBox="0 0 60 60"><rect x="3" y="3" width="54" height="54" rx="8" fill="#2a76be" stroke="#cfdbe6" stroke-width="2"/><path d="M4 40c8 4 18 8 22 16H10c-4 0-6-2-6-6z" fill="#e8cf58"/><path d="M6 36l8-14 6 14 6-16 6 8 8-14 3 6 10-12" fill="none" stroke="#fff" stroke-width="2.400"/><ellipse cx="40" cy="43" rx="12" ry="7" fill="none" stroke="#e6f0f8" stroke-width="1.300"/><text x="40" y="47" text-anchor="middle" class="intel">intel</text></svg></div>
    <div class="app"><svg viewBox="0 0 60 60"><rect x="7" y="7" width="46" height="46" rx="10.500" fill="url(#gFusion)"/><path d="M21 13h20v7H29v6h10v6H29v10h-8z" fill="#c47a2c"/><path d="M21 13l4-2h16v2z" fill="#8d5018"/><text x="39" y="49" text-anchor="middle" class="f360">360</text></svg></div>
    <div class="app run"><svg viewBox="0 0 60 60"><path d="M16 2h42v40L44 58H2V18z" fill="#49a4dc"/><path d="M44 13H30c-8 0-14 4-14 17s6 16 14 16h14v-8H32c-5 0-7-3-7-8s2-9 7-9h12z" fill="#fff"/></svg></div>
    <div class="app"><svg viewBox="0 0 60 60"><path d="M30 4l23 14v24L30 56 7 42V18z" fill="url(#gTool)"/><path d="M30 28l23-10v24L30 56z" fill="#150a1c"/><path d="M34 46l10-6" stroke="#fff" stroke-width="3"/></svg></div>
    <div class="app"><svg viewBox="0 0 60 60"><rect x="7" y="7" width="46" height="46" rx="10.500" fill="url(#gBlue)"/><path d="M16 15h28v17c0 8-8 14-14 16-6-2-14-8-14-16z" fill="#f4f7fb"/><path d="M30 19h10v13c0 5-5 9-10 12z" fill="#2c68df"/></svg></div>
    <div class="app"><svg viewBox="0 0 60 60"><path d="M30 4c9 0 18 3 26 7 0 22-8 38-26 46C12 49 4 33 4 11c8-4 17-7 26-7z" fill="#301a0e" stroke="#ee7c2e" stroke-width="3.600"/><text x="30" y="42" text-anchor="middle" class="gg">G</text></svg></div>
    <div class="app"><svg viewBox="0 0 60 60"><circle cx="30" cy="30" r="26.500" fill="#0f1216" stroke="#5aa8e0" stroke-width="1.800"/><path d="M18 16h24v10M18 16v12M18 21h24M16 30h12l2-3h14v18H16z" fill="none" stroke="#5aa8e0" stroke-width="2"/><path d="M27 38V21l10-2v13" fill="none" stroke="#5aa8e0" stroke-width="2.600"/><circle cx="24" cy="38" r="3" fill="#5aa8e0"/></svg></div>
    <div class="app"><svg viewBox="0 0 60 60"><rect x="7" y="7" width="46" height="46" rx="10" fill="#0a1c33"/><text x="30" y="39" text-anchor="middle" class="ad ps">Ps</text></svg></div>
    <div class="app"><svg viewBox="0 0 60 60"><rect x="7" y="7" width="46" height="46" rx="10" fill="#2d0402"/><text x="30" y="39" text-anchor="middle" class="ad ai">Ai</text></svg></div>
    <div class="app"><svg viewBox="0 0 60 60"><rect x="3" y="3" width="54" height="54" fill="url(#gRedFz)" stroke="#a81c12" stroke-width="2.400" stroke-dasharray="3 2.400"/><path d="M16 47l5-36h21l-1 6H27l-1 8h11l-1 6H25l-2 16zM32 30h16l-1 4-12 12h11l-1 5H28l1-5 12-11h-10z" fill="#fff"/></svg></div>
    <div class="app"><svg viewBox="0 0 60 60"><rect x="7" y="7" width="46" height="46" rx="10.500" fill="url(#gGear)"/><circle cx="30" cy="30" r="18" fill="#3f4242" stroke="#2d2f2f" stroke-width="2.500" stroke-dasharray="1.500 1"/><circle cx="30" cy="30" r="14" fill="none" stroke="#a8abab" stroke-width="2.500"/><circle cx="30" cy="30" r="5" fill="none" stroke="#a8abab" stroke-width="2.500"/><path d="M35 30h10M27 26l-6-8M27 34l-6 9" stroke="#a8abab" stroke-width="2.500"/></svg></div>
    <span class="dsep"></span>
    <div class="app"><svg viewBox="0 0 60 60"><rect x="7" y="7" width="46" height="46" rx="10.500" fill="url(#gWhite)"/><circle cx="30" cy="30" r="19.500" fill="#55c4f2"/><path d="M30 30l17-9.500A19.500 19.500 0 0143 44.500z" fill="#e25055"/><path d="M30 30l13 14.500A19.500 19.500 0 0113 39z" fill="#5a3cc8"/><circle cx="30" cy="30" r="19.500" fill="none" stroke="#222" stroke-width="1.500"/><circle cx="30" cy="30" r="7.500" fill="#2e3238"/><path d="M46 21L33 33l-4-4z" fill="#fff"/></svg></div>
    <div class="app"><svg viewBox="0 0 60 60"><rect x="8" y="8" width="44" height="44" rx="10" fill="#a9c4ea" stroke="#fbfbfb" stroke-width="3"/><path d="M9.500 31h41v6h-41z" fill="#28406a"/><path d="M9.500 36h41v7c0 4-3 7.500-7 7.500H17c-4 0-7.500-3-7.500-7z" fill="#cabfae"/><path d="M11 38l10 4 8-3 4 7H12z" fill="#eef4f6"/><path d="M34 36h17l3 16c0 3-2 4-4 4H35c-3 0-4-2-3-4z" fill="#d5d9da"/><rect x="33" y="30" width="19" height="8" rx="2.500" fill="#161718"/></svg></div>
    <div class="app run dim"><svg viewBox="0 0 60 60"><rect x="7" y="7" width="46" height="46" rx="10.500" fill="url(#gWhite)"/><circle cx="30" cy="30" r="19.500" fill="#5fd071"/><circle cx="30" cy="30" r="13" fill="none" stroke="#9be8a4" stroke-width="1.500"/><path d="M30 30L22 12.500a19.500 19.500 0 0116 0z" fill="#2c72e6"/><circle cx="30" cy="30" r="6" fill="#fff"/><circle cx="30" cy="30" r="4" fill="#2c72e6"/></svg></div>
    <div class="app"><svg><use href="#compass"/></svg><span class="device"><i></i></span></div>
    <span class="dsep"></span>
    <div class="app"><svg viewBox="0 0 60 60"><rect x="3" y="15" width="53" height="31" fill="#d5dae4"/><path d="M3 15h53v6H3z" fill="#24292e"/><path d="M3 21h53v3H3z" fill="#3c5cae"/><path d="M26 23h4v15h-4z" fill="#d8362c"/><path d="M44 33h12v2H44z" fill="#76b53c"/><path d="M3 44h53v2H3z" fill="#2b4076"/><rect x="38" y="39" width="17" height="17" rx="4" fill="#fdfdfd"/><rect x="41" y="42" width="12" height="11" fill="#23803f"/></svg></div>
    <div class="app"><svg viewBox="0 0 60 60"><path d="M10 9h40l-5 43c0 4-30 4-30 0z" fill="url(#gTrash)"/><ellipse cx="30" cy="10" rx="20" ry="5" fill="#33363a" stroke="#85898d" stroke-width="1.600"/><path d="M16 50c6 3 22 3 28 0" stroke="#97999c" fill="none" stroke-width="2"/></svg></div>
  </div>
</div>
</body>
</html>
```
FILE: styles.css
```css
* { box-sizing: border-box; }
html, body { margin: 0; padding: 0; }
body {
  width: 3360px;
  height: 2100px;
  overflow: hidden;
  display: flex;
  flex-direction: column;
  background: #000;
  font-family: Inter, "Liberation Sans", sans-serif;
}
svg { display: block; flex: none; }
.defs { position: absolute; }

/* Menu bar */
.menubar {
  flex: none;
  height: 50px;
  padding: 0 0 2px 43px;
  display: flex;
  align-items: center;
  border-bottom: 2px solid #000;
  background: linear-gradient(90deg, #211b15 0, #211d16 40%, #20231b 58%, #212c27 68%, #22302f 80%, #223441 100%);
  color: #e9e7e5;
  font-size: 26px;
  white-space: nowrap;
}
.menus { display: flex; align-items: center; gap: 42.2px; width: 1857px; flex: none; }
.apple { width: 26px; height: 32px; margin-bottom: 3px; }
.menus span { font-weight: 500; letter-spacing: -.48px; }
.menus .appname { font-weight: 700; margin-left: 3px; letter-spacing: 0; }
.status {
  display: grid;
  align-items: center;
  grid-template-columns: 52px 20px 34px 57px 21px 42px 90px 20px 49px 21px 49px 21px 42px 180px 19px 37px 126px 79px 69px 86px 62px 246px;
}
.vlabel { font-size: 13px; line-height: 12px; font-weight: 600; text-align: center; width: 12px; color: #f0f0ee; }
.bar { width: 18px; height: 36px; border: 2px solid #45473f; border-radius: 3px; display: flex; align-items: flex-end; padding: 0; }
.bar i { display: block; width: 14px; background: #fff; }
.pct { font-weight: 500; letter-spacing: -1.1px; }
.temps { display: grid; grid-template-columns: 42px 42px auto; font-size: 18px; line-height: 18px; }
.temps b { font-weight: 600; letter-spacing: -.5px; }
.netdots { display: flex; flex-direction: column; gap: 5px; }
.netdots i { width: 15px; height: 15px; border-radius: 50%; background: #fff; }
.rates { font-size: 18px; line-height: 18px; font-weight: 600; text-align: right; width: 88px; letter-spacing: -.5px; }
.clock { font-weight: 500; letter-spacing: -.07px; }

/* Browser window */
.window {
  flex: none;
  height: 1956px;
  border-radius: 20px;
  overflow: hidden;
  background: #303231;
  box-shadow: inset 0 2px 0 #7b7c7b, inset 1px 0 0 #5d5f5e, inset -1px 0 0 #5d5f5e;
  display: flex;
  flex-direction: column;
}
.toolbar {
  flex: none;
  height: 104px;
  padding-left: 39px;
  display: grid;
  align-items: center;
  grid-template-columns: 156px 51px 13px 67px 70px 390px 76px 78px 60px 2074px 75px 73px 70px 68px;
}
.lights { display: flex; gap: 16px; padding-left: 1px; }
.lights i { width: 24px; height: 24px; border-radius: 50%; }
.red { background: #ec6a5e; }
.yellow { background: #f4bf4f; }
.green { background: #61c554; }
.vsep { width: 2px; height: 36px; background: #424443; }
.share { margin-bottom: 4px; }
.url {
  width: 1360px;
  height: 56px;
  border: 2px solid #979998;
  border-radius: 11px;
  display: flex;
  align-items: center;
  padding: 2px 10px 0 149px;
  font-size: 26px;
  color: #fff;
}
.addr { margin-left: 12px; white-space: nowrap; font-weight: 500; letter-spacing: -.187px; }
.addr em { font-style: normal; color: #dcdddc; font-weight: 400; }
.translate { margin-left: auto; margin-right: 15px; }

.tabs { flex: none; height: 56px; padding-left: 40px; display: flex; gap: 8px; }
.tab {
  flex: none;
  width: 76px;
  height: 56px;
  border-radius: 12px;
  background: #404241;
  display: flex;
  align-items: center;
  justify-content: center;
}
.tabstack { display: flex; width: 120px; flex: none; }
.tab.under { width: 42px; border-radius: 12px 0 0 12px; justify-content: flex-end; }
.tab.over { width: 78px; box-shadow: -2px 0 0 #303231; padding-left: 2px; }
.f32 { width: 32px; height: 32px; }
.f28 { width: 28px; height: 28px; }
.f24 { width: 24px; height: 26px; }
.ya { font: 700 22px "Liberation Sans", sans-serif; fill: #fff; }
.pe { font: 700 17px "DejaVu Sans Mono", monospace; fill: #111; }
.tab.active { width: 296px; background: #717372; justify-content: flex-start; padding-left: 22px; gap: 16px; color: #f6f6f6; font-size: 24px; letter-spacing: -.1px; white-space: nowrap; }

/* Site header */
.siteheader { flex: none; height: 184px; width: 1961px; margin-left: 699px; display: flex; justify-content: space-between; color: #fff; }
.logo { display: flex; height: 50px; margin-top: 77px; font: 53px/50px Roboto, sans-serif; }
.logo b { width: 160px; font-weight: 800; }
.logo i { font-style: normal; font-weight: 300; }
.logo span { display: inline-block; transform-origin: 0 50%; }
.logo b span { transform: scaleX(.915); }
.logo i span { transform: scaleX(.87); }
.nav { display: flex; align-items: center; gap: 64px; height: 40px; margin-top: 86px; color: #979998; font-size: 28px; white-space: nowrap; }
.edu { letter-spacing: -.25px; margin-bottom: 3px; }
.avatar { border-radius: 12px; }

/* Assignment page */
.page {
  flex: 1;
  padding: 31px 0 0 1066px;
  background: radial-gradient(90px 70px at 0 100%, #fff 0, rgba(255,255,255,0) 100%), radial-gradient(90px 70px at 100% 100%, #fff 0, rgba(255,255,255,0) 100%), linear-gradient(0deg, #dedede 0, #efefef 26px, #fbfbfb 54px, #fff 80px);
}
.content { width: 1227px; white-space: nowrap; }
.course { font: 32px/48px "DejaVu Sans Mono", monospace; color: #6a737d; }
h1 { margin: 3px 0 0; font-size: 62px; line-height: 96px; font-weight: 450; letter-spacing: -2.5px; color: #24292e; }
.dash { display: inline-block; transform: scaleX(.86); transform-origin: 0 50%; margin-left: 3px; }
.task { color: #448544; font-weight: 500; letter-spacing: -2.43px; }
p { margin: 46px 0 0; font-size: 39px; line-height: 60px; letter-spacing: -1.06px; color: #586069; }
code { font: 32px "DejaVu Sans Mono", monospace; letter-spacing: -.06px; background: #f3f7fe; border-radius: 6px; padding: 8px; margin-right: 8px; margin-left: 1px; }
a { color: #2568d0; letter-spacing: -.5px; }
.actions { margin-top: 84px; border-top: 2px solid #e2e4e7; padding-top: 48px; display: flex; justify-content: flex-end; }
button { width: 377px; height: 64px; border: 2px solid #4a9050; border-radius: 12px; background: #55a257; color: #fff; font: 600 28px Inter, sans-serif; letter-spacing: -.454px; padding: 0; box-shadow: 0 2px 0 rgba(27,31,35,.1); }

/* Dock */
.desk {
  flex: none;
  height: 94px;
  padding: 6px 43px 10px;
  background: linear-gradient(180deg, rgba(0,0,0,.7) 0, rgba(0,0,0,.35) 14px, rgba(0,0,0,0) 50px), linear-gradient(90deg, #97404a 0, #8f3f47 1340px, #0a0506 1385px, #060203 2120px, #802c36 2160px, #7a2830 2330px, #100506 2400px, #000 100%);
}
.dock {
  height: 78px;
  border-radius: 18px;
  border: 2px solid rgba(255,255,255,.2);
  padding-left: 3px;
  display: flex;
  background: linear-gradient(90deg, #5e2b2e 0, #6a3032 1200px, #5c2b2e 1290px, #1f1417 1420px, #1c1315 1900px, #55222a 2080px, #5a2228 2260px, #2c1518 2460px, #171313 2600px, #151312 100%);
}
.app { position: relative; width: 60.54px; height: 74px; flex: none; padding-top: 4px; display: flex; flex-direction: column; align-items: center; }
.app svg { width: 60px; height: 60px; }
.run::after { content: ""; width: 6px; height: 7px; border-radius: 50%; background: #eab0b4; margin-top: 2px; }
.run.dim::after { background: #a09a9a; }
.dsep { width: 2px; height: 58px; margin: 8px 12.500px 0; background: #4a4746; flex: none; }
.badge { position: absolute; right: 1px; top: -2px; width: 21px; height: 21px; border-radius: 50%; background: #e8503f; color: #fff; font-size: 14px; line-height: 21px; text-align: center; }
.device { position: absolute; right: 1px; top: -2px; width: 21px; height: 21px; border-radius: 50%; background: #d4d6d8; display: flex; align-items: center; justify-content: center; }
.device i { width: 9px; height: 14px; border: 1px solid #222; border-radius: 1.500px; background: #8b8e90; }
.cal-m { font: 700 9.500px Inter, sans-serif; fill: #fff; }
.cal-d { font: 300 28px Inter, sans-serif; fill: #222; }
.ms { font: 700 14px "Open Sans", sans-serif; fill: #fff; }
.jet { font: 700 17px Inter, sans-serif; fill: #fff; letter-spacing: -.5px; }
.intel { font: italic 11px "Liberation Sans", sans-serif; fill: #fff; }
.f360 { font: 700 8px Inter, sans-serif; fill: #d9822c; }
.gg { font: 800 33px Inter, sans-serif; fill: #f08a3c; }
.ad { font: 700 23px "Open Sans", sans-serif; }
.ps { fill: #4ea6f4; }
.ai { fill: #f39a38; }
```
